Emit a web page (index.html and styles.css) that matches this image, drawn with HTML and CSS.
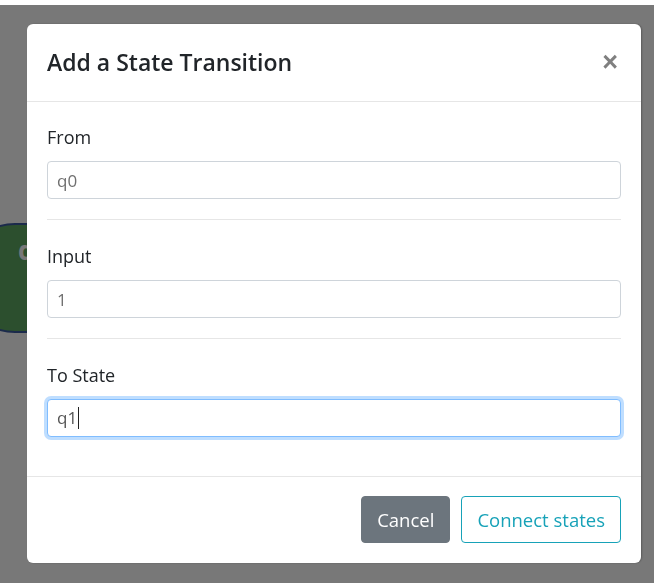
FILE: index.html
```html
<!DOCTYPE html>
<html lang="en">
<head>
<meta charset="utf-8">
<title>Automaton editor</title>
<link rel="stylesheet" href="styles.css">
</head>
<body>
  <div class="canvas">
    <div class="state-node"><span class="state-name">q0</span></div>
  </div>

  <div class="backdrop">
    <div class="modal-dialog">
      <div class="modal-header">
        <h5 class="modal-title">Add a State Transition</h5>
        <button class="close" type="button" aria-label="Close">&times;</button>
      </div>
      <div class="modal-body">
        <div class="form-group">
          <label class="field-label">From</label>
          <input class="form-control" type="text" value="q0" readonly>
        </div>
        <hr class="divider">
        <div class="form-group">
          <label class="field-label">Input</label>
          <input class="form-control" type="text" value="1" readonly>
        </div>
        <hr class="divider">
        <div class="form-group">
          <label class="field-label">To State</label>
          <div class="form-control is-focused" role="textbox">q1<span class="caret"></span></div>
        </div>
      </div>
      <div class="modal-footer">
        <button class="btn btn-secondary" type="button">Cancel</button>
        <button class="btn btn-outline-info" type="button">Connect states</button>
      </div>
    </div>
  </div>
</body>
</html>
```
FILE: styles.css
```css
* { box-sizing: border-box; }

html, body {
  margin: 0;
  height: 100%;
}

body {
  background: #ffffff;
  font-family: "Open Sans", "Noto Sans", sans-serif;
  color: #212529;
  overflow: hidden;
}

/* drawing area behind the dialog */
.canvas {
  position: relative;
  height: 100%;
}

.state-node {
  position: absolute;
  left: -40px;
  top: 223px;
  width: 160px;
  height: 110px;
  border-radius: 55px;
  background: #5fa862;
  border: 2px solid #3a5aa0;
  display: flex;
  align-items: center;
  padding-left: 56px;
}

.state-name {
  color: #ffffff;
  font-size: 26px;
  font-weight: 700;
  margin-top: -56px;
}

/* dimmed overlay holding the dialog */
.backdrop {
  position: fixed;
  left: 0;
  right: 0;
  top: 5px;
  bottom: 0;
  background: rgba(0, 0, 0, 0.53);
  padding: 19px 13px 0 27px;
}

.modal-dialog {
  width: 614px;
  background: #ffffff;
  border-radius: 6px;
  box-shadow: 1px 0 2px rgba(0, 0, 0, 0.25);
}

.modal-header {
  display: flex;
  align-items: center;
  justify-content: space-between;
  height: 78px;
  padding: 0 20px;
  border-bottom: 1px solid #e6e6e6;
}

.modal-title {
  margin: 0;
  font-size: 23px;
  font-weight: 600;
  line-height: 1.5;
  color: #212529;
}

.close {
  background: none;
  border: 0;
  padding: 0;
  margin-right: 3px;
  font-family: "Liberation Sans", sans-serif;
  font-size: 27px;
  font-weight: 700;
  line-height: 1;
  color: #808080;
}

.modal-body {
  padding: 21px 20px 39px;
}

.form-group {
  display: flex;
  flex-direction: column;
}

.field-label {
  font-size: 18px;
  line-height: 28px;
  margin-bottom: 10px;
  color: #212529;
}

.form-control {
  display: block;
  width: 100%;
  height: 38px;
  padding: 0 9px;
  font-family: inherit;
  font-size: 17px;
  line-height: 36px;
  color: #6f6f6f;
  background: #ffffff;
  border: 1px solid #ced4da;
  border-radius: 4px;
  outline: none;
}

.form-control.is-focused {
  color: #555555;
  border-color: #80bdff;
  box-shadow: 0 0 0 3px rgba(0, 123, 255, 0.25);
}

.caret {
  display: inline-block;
  width: 1px;
  height: 22px;
  margin-left: 1px;
  vertical-align: -5px;
  background: #222222;
}

.divider {
  margin: 20px 0 22px;
  border: 0;
  border-top: 1px solid #e6e6e6;
}

.modal-footer {
  display: flex;
  justify-content: flex-end;
  gap: 11px;
  padding: 19px 20px 20px;
  border-top: 1px solid #e6e6e6;
}

.btn {
  height: 47px;
  padding: 0 15px;
  font-family: inherit;
  font-size: 18.5px;
  border-radius: 4px;
  border: 1px solid transparent;
  background: none;
}

.btn-secondary {
  background: #6c757d;
  border-color: #6c757d;
  color: #ffffff;
}

.btn-outline-info {
  border-color: #17a2b8;
  color: #17a2b8;
}
```
